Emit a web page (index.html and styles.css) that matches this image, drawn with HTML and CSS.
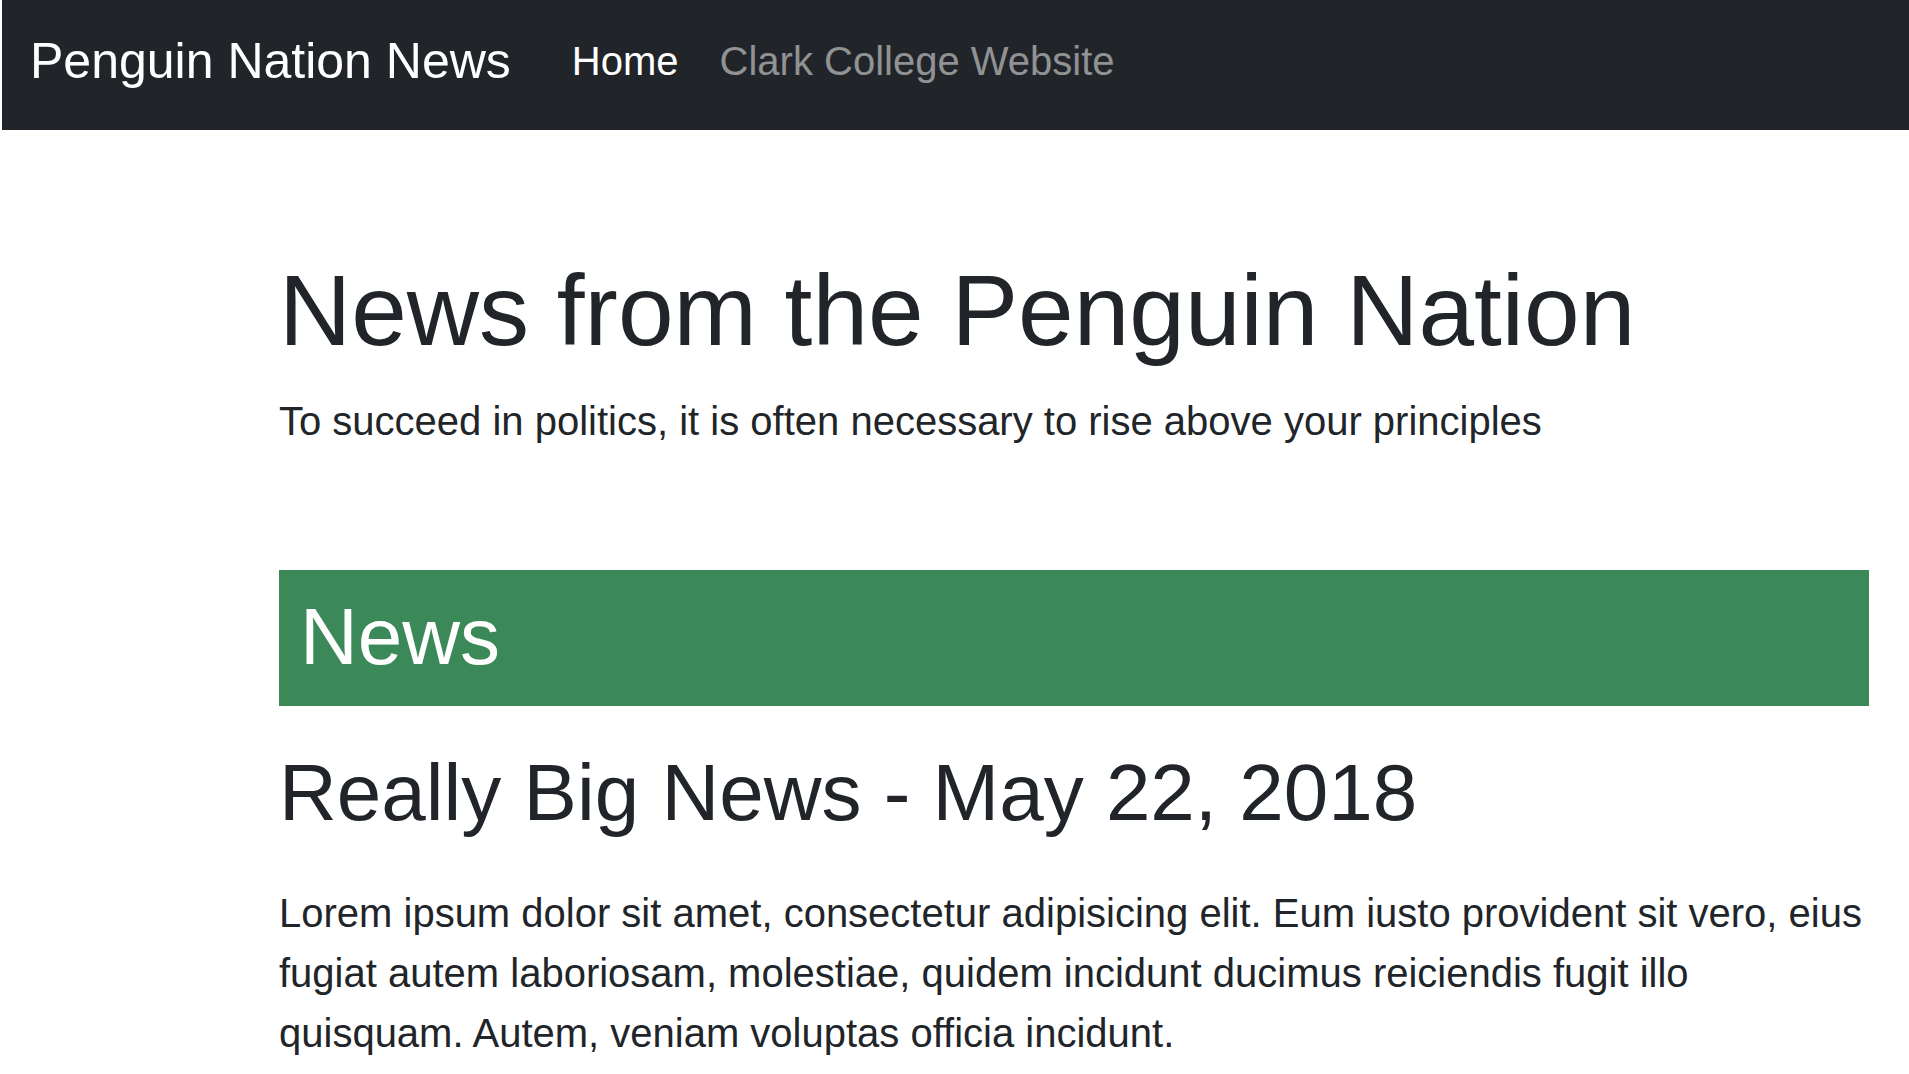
FILE: index.html
```html
<!DOCTYPE html>
<html lang="en">
<head>
<meta charset="utf-8">
<title>Penguin Nation News</title>
<link rel="stylesheet" href="styles.css">
</head>
<body>
<nav class="navbar">
  <a class="brand" href="#">Penguin Nation News</a>
  <ul class="nav">
    <li><a class="nav-link active" href="#">Home</a></li>
    <li><a class="nav-link" href="#">Clark College Website</a></li>
  </ul>
</nav>
<main class="container">
  <header class="hero">
    <h1 class="display">News from the Penguin Nation</h1>
    <p class="lead">To succeed in politics, it is often necessary to rise above your principles</p>
  </header>
  <section class="news">
    <h2 class="section-title">News</h2>
    <article class="story">
      <h3 class="story-title">Really Big News - May 22, 2018</h3>
      <p class="story-text">Lorem ipsum dolor sit amet, consectetur adipisicing elit. Eum iusto provident sit vero, eius fugiat autem laboriosam, molestiae, quidem incidunt ducimus reiciendis fugit illo quisquam. Autem, veniam voluptas officia incidunt.</p>
    </article>
  </section>
</main>
</body>
</html>
```

FILE: styles.css
```css
* { box-sizing: border-box; }
html, body { margin: 0; padding: 0; }
body {
  font-family: "Liberation Sans", Arial, sans-serif;
  color: #212529;
  background: #fff;
}
.navbar {
  margin-left: 2px;
  height: 130px;
  background: #212529;
  display: flex;
  align-items: center;
  padding: 0 0 9px 28px;
}
.brand {
  color: #fff;
  text-decoration: none;
  font-size: 50px;
  line-height: 1.2;
  margin-right: 61px;
}
.nav {
  list-style: none;
  margin: 0;
  padding: 0;
  display: flex;
  gap: 41px;
}
.nav-link {
  color: rgba(255,255,255,0.5);
  text-decoration: none;
  font-size: 40px;
  line-height: 1.2;
}
.nav-link.active { color: #fff; }
.container {
  padding-left: 279px;
  padding-right: 40px;
}
.hero { padding-top: 120px; }
.display {
  margin: 0;
  font-size: 100px;
  font-weight: 400;
  line-height: 1.2;
}
.lead {
  margin: 21px 0 0;
  font-size: 40px;
  line-height: 60px;
}
.news { margin-top: 119px; }
.section-title {
  margin: 0;
  background: #3b8858;
  color: #fff;
  font-size: 80px;
  font-weight: 400;
  line-height: 1.2;
  padding: 19px 21px 21px;
}
.story-title {
  margin: 39px 0 0;
  font-size: 80px;
  font-weight: 400;
  line-height: 1.2;
}
.story-text {
  margin: 42px 0 0;
  font-size: 40px;
  line-height: 60px;
}
```
